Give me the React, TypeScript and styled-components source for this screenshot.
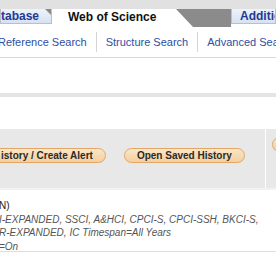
import React from "react";
import styled, { createGlobalStyle } from "styled-components";

const Global = createGlobalStyle`
  html, body { margin: 0; padding: 0; background: #ffffff; overflow: hidden; }
  body { font-family: "Liberation Sans", Arial, sans-serif; }
`;

const Page = styled.div`
  width: 276px;
  height: 260px;
  overflow: hidden;
  display: flex;
  flex-direction: column;
`;

const TopStrip = styled.div`
  height: 9px;
  background: #e1e1e1;
  flex: none;
`;

const TabRow = styled.div`
  display: flex;
  height: 18px;
  flex: none;
  background: #ffffff;
`;

const InactiveTab = styled.div<{ $width?: string }>`
  position: relative;
  box-sizing: border-box;
  width: ${(p) => p.$width ?? "auto"};
  flex: ${(p) => (p.$width ? "none" : "1")};
  height: 15px;
  background: linear-gradient(#eef3fb, #d6e1f1);
  border: 1px solid #b7c0cc;
  border-top: none;
  display: flex;
  align-items: center;
  padding-left: ${(p) => (p.$width ? "0" : "8px")};
  font-size: 12px;
  font-weight: bold;
  color: #1d3a94;
  white-space: nowrap;
  overflow: hidden;
`;

const Fold = styled.span`
  position: absolute;
  top: 0;
  right: 0;
  width: 0;
  height: 0;
  border-top: 6px solid #8a8a8a;
  border-left: 6px solid transparent;
`;

const ActiveTab = styled.div`
  width: 124px;
  flex: none;
  height: 15px;
  display: flex;
  align-items: center;
  padding-left: 16px;
  box-sizing: border-box;
  font-size: 12px;
  font-weight: bold;
  color: #111111;
  white-space: nowrap;
`;

const Slant = styled.div`
  width: 55px;
  flex: none;
  height: 18px;
  background: #8b8b8b;
  clip-path: polygon(0 0, 100% 0, 100% 100%, 17px 100%);
`;

const LinkRow = styled.div`
  display: flex;
  align-items: center;
  height: 30px;
  flex: none;
  border-bottom: 1px solid #dadada;
  white-space: nowrap;
`;

const NavLink = styled.span<{ $first?: boolean }>`
  font-size: 11px;
  color: #2d4fa3;
  padding: 0 9px;
  margin-left: ${(p) => (p.$first ? "-11px" : "0")};
  line-height: 20px;
  & + & {
    border-left: 1px solid #d4d4d4;
  }
`;

const Blank = styled.div<{ $h: number }>`
  height: ${(p) => p.$h}px;
  flex: none;
`;

const Band = styled.div`
  height: 4px;
  background: #e4e4e4;
  flex: none;
`;

const Panel = styled.div`
  display: flex;
  height: 59px;
  flex: none;
  background: #e8e8e8;
  border-bottom: 2px solid #f2f2f2;
`;

const PanelMain = styled.div`
  width: 266px;
  flex: none;
  display: flex;
  align-items: flex-start;
  padding-top: 19px;
  box-sizing: border-box;
  border-right: 1px solid #ffffff;
`;

const PanelSide = styled.div`
  flex: 1;
  padding: 8px 0 0 6px;
  overflow: hidden;
`;

const PillButton = styled.div<{ $offset: number }>`
  flex: none;
  height: 15px;
  box-sizing: border-box;
  margin-left: ${(p) => p.$offset}px;
  padding: 0 12px;
  border-radius: 8px;
  border: 1px solid #e2a766;
  background: linear-gradient(#fbe6c8, #f5cf9c);
  display: flex;
  align-items: center;
  font-size: 10px;
  font-weight: bold;
  color: #2a2a2a;
  white-space: nowrap;
`;

const TextBlock = styled.div`
  padding-top: 9px;
  flex: none;
  height: 62px;
  box-sizing: border-box;
  border-bottom: 1px solid #dddddd;
  white-space: nowrap;
`;

const QueryLine = styled.div<{ $plain?: boolean }>`
  font-size: 10px;
  line-height: 13.5px;
  font-style: ${(p) => (p.$plain ? "normal" : "italic")};
  color: ${(p) => (p.$plain ? "#222222" : "#555555")};
  margin-left: -1px;
`;

export default function App() {
  return (
    <>
      <Global />
      <Page>
        <TopStrip />
        <TabRow>
          <InactiveTab $width="52px">
            tabase
            <Fold />
          </InactiveTab>
          <ActiveTab>Web of Science</ActiveTab>
          <Slant />
          <InactiveTab>Additional Resources</InactiveTab>
        </TabRow>
        <LinkRow>
          <NavLink $first>Reference Search</NavLink>
          <NavLink>Structure Search</NavLink>
          <NavLink>Advanced Search</NavLink>
        </LinkRow>
        <Blank $h={35} />
        <Band />
        <Blank $h={32} />
        <Panel>
          <PanelMain>
            <PillButton $offset={-12}>istory / Create Alert</PillButton>
            <PillButton $offset={18}>Open Saved History</PillButton>
          </PanelMain>
          <PanelSide>
            <PillButton $offset={0}>Combine</PillButton>
          </PanelSide>
        </Panel>
        <TextBlock>
          <QueryLine $plain>N)</QueryLine>
          <QueryLine>I-EXPANDED, SSCI, A&amp;HCI, CPCI-S, CPCI-SSH, BKCI-S,</QueryLine>
          <QueryLine>R-EXPANDED, IC Timespan=All Years</QueryLine>
          <QueryLine>=On</QueryLine>
        </TextBlock>
      </Page>
    </>
  );
}
